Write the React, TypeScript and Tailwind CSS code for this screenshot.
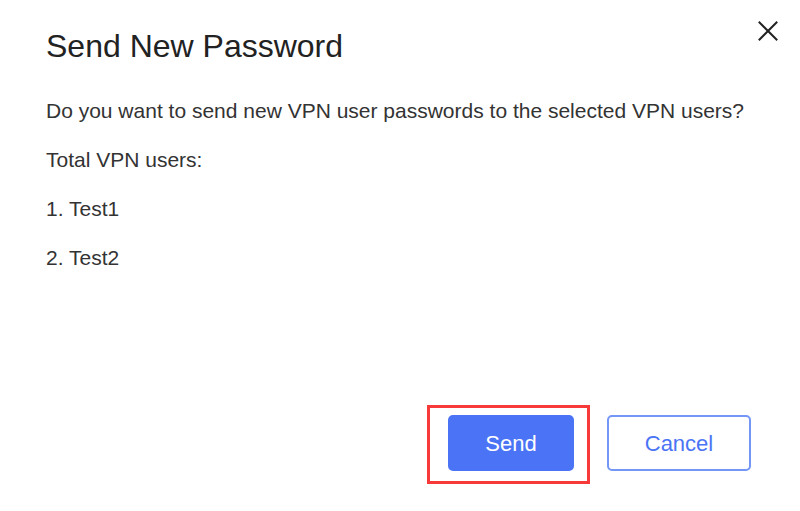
import React from 'react';

const users = ['Test1', 'Test2'];

// Close icon, thin cross
const CloseIcon = ({ className }: { className?: string }) => (
  <svg className={className} viewBox="0 0 20 20" fill="none" stroke="currentColor" strokeWidth="2" strokeLinecap="square">
    <path d="M1.5 1.5l17 17M18.5 1.5l-17 17" />
  </svg>
);

export default function App() {
  return (
    <div className="relative flex h-[511px] w-[800px] flex-col bg-white font-['Liberation_Sans',Arial,sans-serif] text-[#333]">
      <button className="absolute left-[758px] top-[21px] h-5 w-5 text-[#222]" aria-label="Close">
        <CloseIcon className="h-5 w-5" />
      </button>

      <div className="px-[46px] pt-[27px]">
        <h2 className="text-[32px] leading-[38px] text-[#222]">Send New Password</h2>

        <div className="mt-[34px] flex flex-col gap-[25px] text-[21px] leading-[24px]">
          <p>Do you want to send new VPN user passwords to the selected VPN users?</p>
          <p>Total VPN users:</p>
          {users.map((u, i) => (
            <p key={u}>
              {i + 1}. {u}
            </p>
          ))}
        </div>
      </div>

      <div className="mt-auto flex justify-end gap-[33px] pb-[40px] pr-[49px]">
        <div className="relative">
          {/* highlight frame */}
          <span className="pointer-events-none absolute -left-[21px] -right-[16px] -top-[10px] -bottom-[13px] border-[3px] border-[#f8393a]" />
          <button className="h-[56px] w-[126px] rounded-[5px] bg-[#4a74f5] text-[22px] text-white">Send</button>
        </div>
        <button className="h-[56px] w-[144px] rounded-[5px] border-2 border-[#7396f7] bg-white text-[22px] text-[#4a74f5]">
          Cancel
        </button>
      </div>
    </div>
  );
}
